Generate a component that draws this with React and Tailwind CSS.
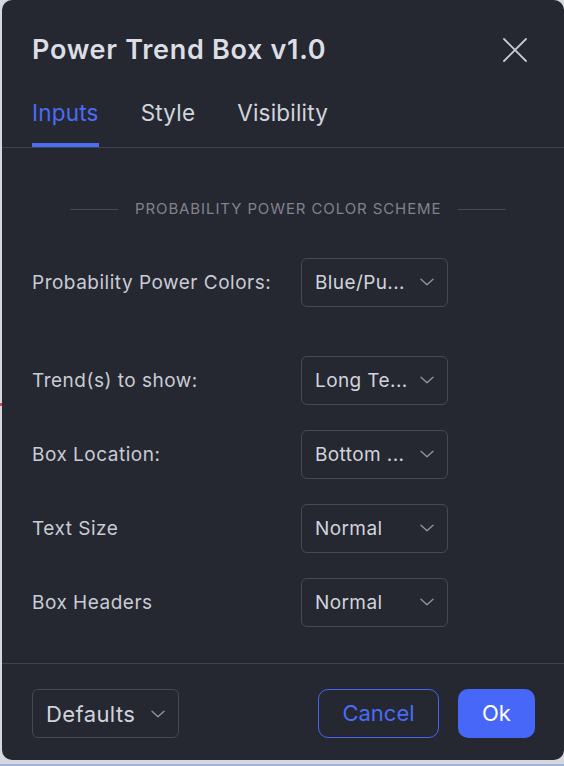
import React, { useState } from 'react';

function Chevron() {
  return (
    <svg width="14" height="8" viewBox="0 0 14 8" fill="none" className="shrink-0">
      <path d="M1 1.2l6 5.6 6-5.6" stroke="#9598a1" strokeWidth="1.3" strokeLinecap="round" strokeLinejoin="round" />
    </svg>
  );
}

function Select({ value, className = 'w-[147px] text-[19px]' }) {
  return (
    <div className={`flex h-[49px] ${className} items-center justify-between rounded-md border border-[#474a54] pl-[13px] pr-[13px] tracking-[0.4px] text-[#d1d4dc]`}>
      <span className="whitespace-nowrap pt-[2px]">{value}</span>
      <Chevron />
    </div>
  );
}

function Row({ label, value }) {
  return (
    <div className="flex items-center">
      <div className="w-[269px] pt-[2px] text-[19px] tracking-[0.5px] text-[#c9ccd4]">{label}</div>
      <Select value={value} />
    </div>
  );
}

export default function App() {
  const [tab, setTab] = useState('Inputs');
  const tabs = ['Inputs', 'Style', 'Visibility'];

  return (
    <div
      className="relative h-[766px] w-[564px] overflow-hidden bg-[#d6d8de] pb-[4px] pl-[2px]"
      style={{ fontFamily: 'Inter, "Noto Sans", sans-serif' }}
    >
      <div className="absolute left-0 top-[403px] h-[3px] w-[2px] bg-[#e0454d]" />
      <div className="absolute bottom-0 left-0 h-[2px] w-full bg-[#9fb3df]" />
      <div className="flex h-[760px] w-[562px] flex-col rounded-[10px] bg-[#252731]">
        {/* header */}
        <div className="flex items-center justify-between pl-[30px] pr-[36px] pt-[30px]">
          <h1 className="text-[27px] font-semibold tracking-[0.7px] text-[#dcdee4]">Power Trend Box v1.0</h1>
          <svg width="26" height="26" viewBox="0 0 26 26" fill="none">
            <path d="M2 2l22 22M24 2L2 24" stroke="#c7cad2" strokeWidth="1.8" strokeLinecap="round" />
          </svg>
        </div>

        {/* tabs */}
        <div className="mt-[25px] flex gap-[42px] border-b border-[#40434d] pl-[30px]">
          {tabs.map((t) => (
            <button
              key={t}
              onClick={() => setTab(t)}
              className={`border-b-[4px] pb-[14px] text-[22.5px] tracking-[0.2px] ${
                tab === t ? 'border-[#4a6cf7] text-[#4a6cf7]' : 'border-transparent text-[#d1d4dc]'
              }`}
            >
              {t}
            </button>
          ))}
        </div>

        {/* body */}
        <div className="flex flex-1 flex-col pl-[30px]">
          <div className="mt-[50px] flex items-center pl-[38px]">
            <div className="h-px w-[48px] bg-[#474a54]" />
            <span className="px-[17px] text-[15px] tracking-[0.9px] text-[#80838d]">PROBABILITY POWER COLOR SCHEME</span>
            <div className="h-px w-[48px] bg-[#474a54]" />
          </div>

          <div className="mt-[37px]">
            <Row label="Probability Power Colors:" value="Blue/Pu..." />
          </div>

          <div className="mt-[49px] flex flex-col gap-[25px]">
            <Row label="Trend(s) to show:" value="Long Te..." />
            <Row label="Box Location:" value="Bottom ..." />
            <Row label="Text Size" value="Normal" />
            <Row label="Box Headers" value="Normal" />
          </div>
        </div>

        {/* footer */}
        <div className="flex items-center justify-between border-t border-[#40434d] pb-[22px] pl-[30px] pr-[29px] pt-[25px]">
          <Select value="Defaults" className="w-[147px] pr-[12px] text-[22px]" />
          <div className="flex gap-[19px]">
            <button className="h-[49px] w-[121px] rounded-[10px] border border-[#4466f2] text-[22px] text-[#4a6cf7]">Cancel</button>
            <button className="h-[49px] w-[77px] rounded-[10px] bg-[#4767f8] text-[22px] text-white">Ok</button>
          </div>
        </div>
      </div>
    </div>
  );
}
